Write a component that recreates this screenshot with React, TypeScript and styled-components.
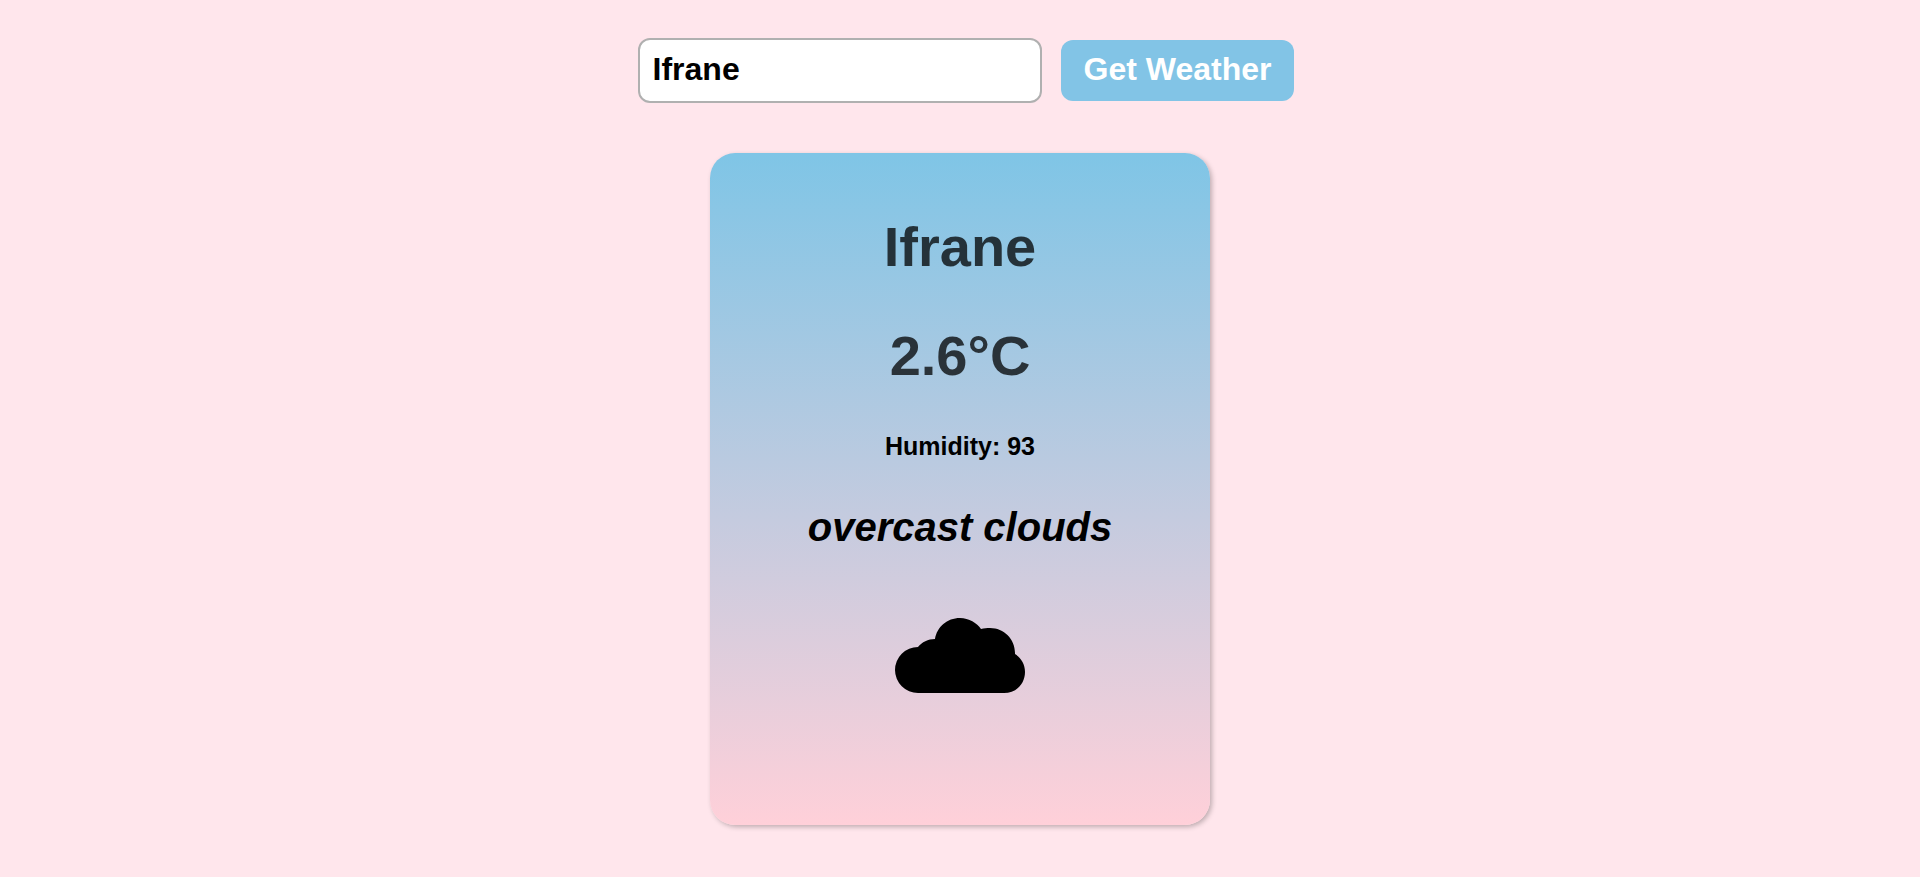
import { useState } from "react";
import styled, { createGlobalStyle } from "styled-components";

const GlobalStyle = createGlobalStyle`
  body {
    margin: 0;
    background: #ffe6ec;
    font-family: Arial, "Liberation Sans", sans-serif;
  }
`;

const Page = styled.main`
  display: flex;
  flex-direction: column;
  align-items: center;
  padding: 38px 16px;
`;

const WeatherForm = styled.form`
  display: flex;
  align-items: center;
  justify-content: center;
  gap: 19px;
  margin-bottom: 50px;
  padding-left: 12px;
`;

const CityInput = styled.input`
  box-sizing: border-box;
  width: 404px;
  padding: 11px 13px 13px;
  border: 2px solid #b0b0b0;
  border-radius: 12px;
  background: #ffffff;
  color: #000000;
  font-family: inherit;
  font-size: 32px;
  font-weight: bold;
  line-height: 37px;
`;

const SubmitButton = styled.button`
  padding: 11px 23px 13px;
  border: 0;
  border-radius: 12px;
  background: #82c4e6;
  color: #ffffff;
  font-family: inherit;
  font-size: 32px;
  font-weight: bold;
  line-height: 37px;
  cursor: pointer;
`;

const Card = styled.section`
  display: flex;
  flex-direction: column;
  align-items: center;
  gap: 45px;
  box-sizing: border-box;
  width: 500px;
  max-width: 100%;
  padding: 62px 48px 132px;
  border-radius: 25px;
  background: linear-gradient(180deg, #7fc5e6, #ffd0d9);
  box-shadow: 2px 2px 5px rgba(0, 0, 0, 0.25);
  text-align: center;
`;

const City = styled.h1`
  margin: 0;
  color: rgba(0, 0, 0, 0.75);
  font-size: 56px;
  line-height: 64px;
`;

const Temperature = styled.p`
  margin: 0;
  color: rgba(0, 0, 0, 0.75);
  font-size: 56px;
  font-weight: bold;
  line-height: 64px;
`;

const Humidity = styled.p`
  margin: 0;
  font-size: 25px;
  font-weight: bold;
  line-height: 27px;
`;

const Description = styled.p`
  margin: 0;
  font-size: 40px;
  font-style: italic;
  font-weight: bold;
  line-height: 45px;
`;

const CloudIcon = styled.svg`
  display: block;
  width: 130px;
  height: 75px;
  margin-top: 23px;
`;

export default function App() {
  const [city, setCity] = useState("Ifrane");

  return (
    <>
      <GlobalStyle />
      <Page>
        <WeatherForm onSubmit={(event) => event.preventDefault()}>
          <CityInput
            type="text"
            aria-label="City"
            value={city}
            onChange={(event) => setCity(event.target.value)}
          />
          <SubmitButton type="submit">Get Weather</SubmitButton>
        </WeatherForm>
        <Card>
          <City>Ifrane</City>
          <Temperature>2.6°C</Temperature>
          <Humidity>Humidity: 93</Humidity>
          <Description>overcast clouds</Description>
          <CloudIcon viewBox="0 0 130 75" role="img" aria-label="Cloudy">
            <path d="M23 75A23 23 0 0 1 0 52A23 23 0 0 1 23 29C27 24 33 21 40 21C42 9 52 0 65 0C74 0 82 5 86 11C89 10 92 10 95 10C109 10 120 21 120 35V36C126 40 130 46 130 54C130 66 121 75 109 75Z" />
          </CloudIcon>
        </Card>
      </Page>
    </>
  );
}
